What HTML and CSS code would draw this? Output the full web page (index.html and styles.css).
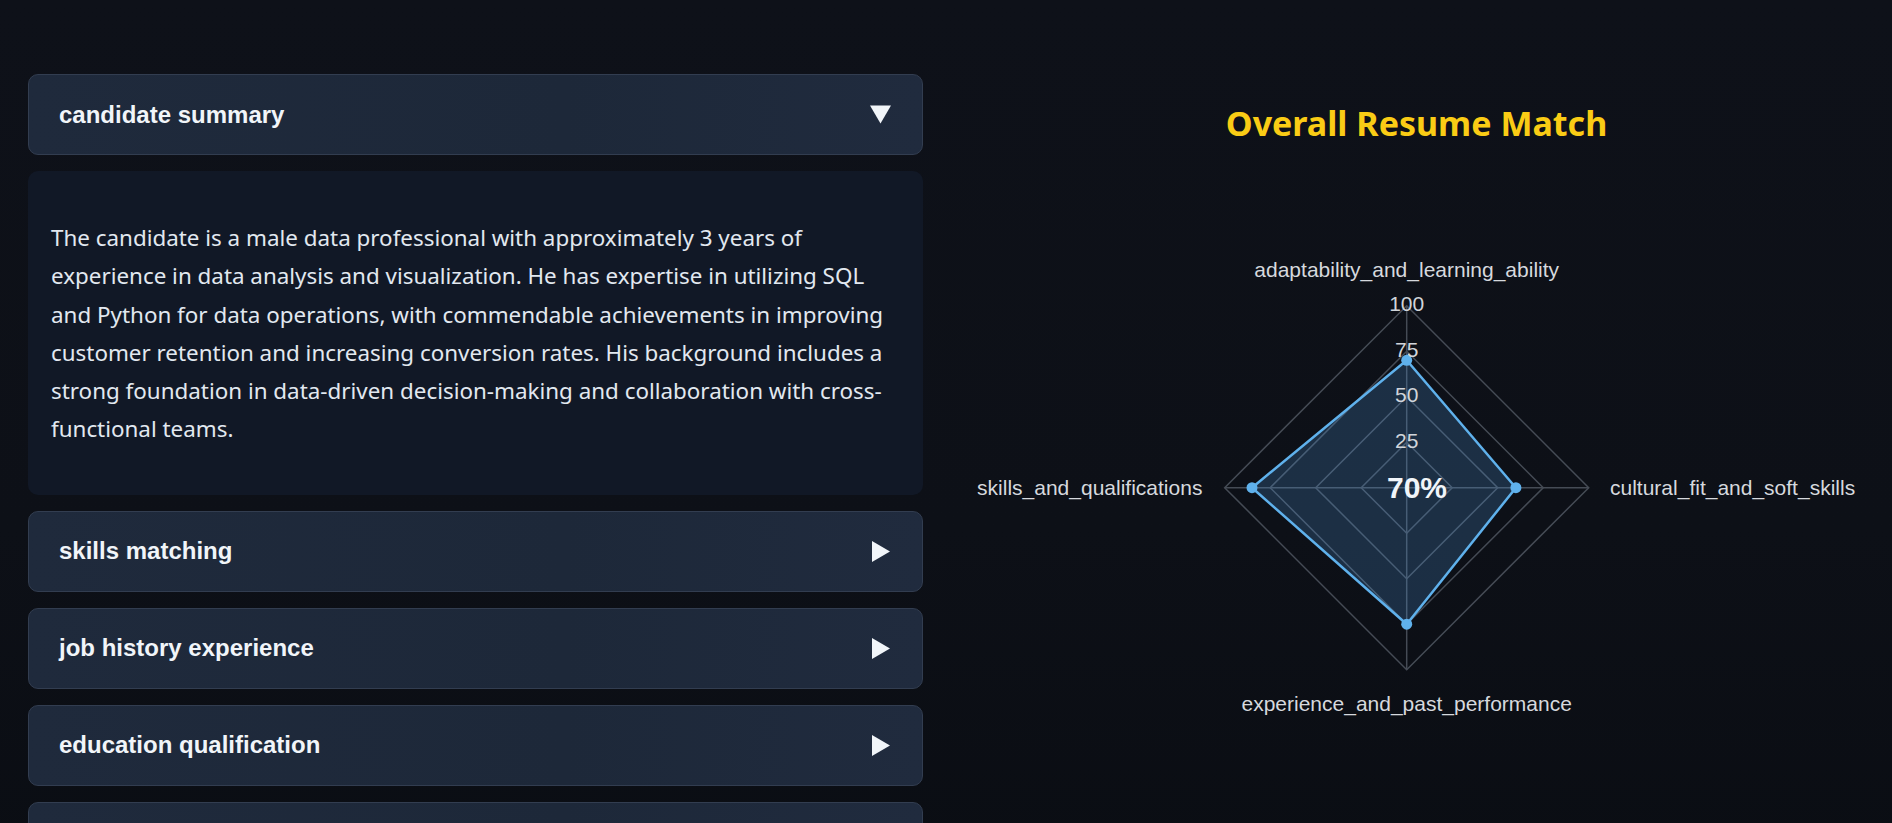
FILE: index.html
```html
<!DOCTYPE html>
<html lang="en">
<head>
<meta charset="utf-8">
<title>Resume Match</title>
<link rel="stylesheet" href="styles.css">
</head>
<body>
<main class="layout">
  <section class="left">
    <div class="acc-head">
      <span class="acc-title">candidate summary</span>
      <svg class="tri" width="21" height="21" viewBox="0 0 21 21"><polygon points="0,1.5 21,1.5 10.5,19.5" /></svg>
    </div>
    <div class="acc-body">
      <p>The candidate is a male data professional with approximately 3 years of experience in data analysis and visualization. He has expertise in utilizing SQL and Python for data operations, with commendable achievements in improving customer retention and increasing conversion rates. His background includes a strong foundation in data-driven decision-making and collaboration with cross-functional teams.</p>
    </div>
    <div class="acc-head">
      <span class="acc-title">skills matching</span>
      <svg class="tri" width="21" height="21" viewBox="0 0 21 21"><polygon points="2,0 20,10.5 2,21" /></svg>
    </div>
    <div class="acc-head">
      <span class="acc-title">job history experience</span>
      <svg class="tri" width="21" height="21" viewBox="0 0 21 21"><polygon points="2,0 20,10.5 2,21" /></svg>
    </div>
    <div class="acc-head">
      <span class="acc-title">education qualification</span>
      <svg class="tri" width="21" height="21" viewBox="0 0 21 21"><polygon points="2,0 20,10.5 2,21" /></svg>
    </div>
    <div class="acc-head acc-partial"></div>
  </section>
  <section class="right">
    <h2 class="chart-title">Overall Resume Match</h2>
    <svg class="radar" width="895" height="560" viewBox="0 0 895 560">
      <g class="grid">
        <polygon points="437.7,242.2 483.2,287.7 437.7,333.2 392.2,287.7" />
        <polygon points="437.7,196.7 528.7,287.7 437.7,378.7 346.7,287.7" />
        <polygon points="437.7,151.2 574.2,287.7 437.7,424.2 301.2,287.7" />
        <polygon points="437.7,105.7 619.7,287.7 437.7,469.7 255.7,287.7" />
        <line x1="437.7" y1="287.7" x2="437.7" y2="105.7" />
        <line x1="437.7" y1="287.7" x2="619.7" y2="287.7" />
        <line x1="437.7" y1="287.7" x2="437.7" y2="469.7" />
        <line x1="437.7" y1="287.7" x2="255.7" y2="287.7" />
      </g>
      <polygon class="data" points="437.7,160.3 546.9,287.7 437.7,424.2 283,287.7" />
      <g class="pts">
        <circle cx="437.7" cy="160.3" r="5.5" />
        <circle cx="546.9" cy="287.7" r="5.5" />
        <circle cx="437.7" cy="424.2" r="5.5" />
        <circle cx="283" cy="287.7" r="5.5" />
      </g>
      <g class="ticks">
        <text x="437.7" y="103.7">100</text>
        <text x="437.7" y="149.2">75</text>
        <text x="437.7" y="194.7">50</text>
        <text x="437.7" y="240.4">25</text>
      </g>
      <g class="labels">
        <text x="437.7" y="69.5" text-anchor="middle">adaptability_and_learning_ability</text>
        <text x="641" y="287.7" text-anchor="start">cultural_fit_and_soft_skills</text>
        <text x="437.7" y="503" text-anchor="middle">experience_and_past_performance</text>
        <text x="233.4" y="287.7" text-anchor="end">skills_and_qualifications</text>
      </g>
      <text class="pct" x="448" y="287.7">70%</text>
    </svg>
  </section>
</main>
</body>
</html>
```
FILE: styles.css
```css
* { box-sizing: border-box; }
html, body { margin: 0; padding: 0; }
body {
  background: linear-gradient(180deg, #0e1119 0%, #0d1017 60%, #0a0d13 100%);
  min-height: 100vh;
  color: #e2e8f0;
  font-family: "Liberation Sans", Arial, sans-serif;
}
.layout {
  display: grid;
  grid-template-columns: 1fr 1fr;
  column-gap: 46px;
  padding: 74px 28px 0 28px;
}
.left {
  display: flex;
  flex-direction: column;
  gap: 16px;
}
.acc-head {
  display: flex;
  align-items: center;
  justify-content: space-between;
  height: 81px;
  padding: 0 31px 0 30px;
  background: linear-gradient(90deg, #1f2a3c 0%, #1d2839 60%, #202b3e 100%);
  border: 1px solid #323d50;
  border-radius: 10px;
}
.acc-title {
  font-family: "Liberation Sans", Arial, sans-serif;
  font-weight: 700;
  font-size: 24px;
  color: #f1f5f9;
}
.tri polygon { fill: #f1f5f9; }
.acc-body {
  background: #111826;
  border-radius: 10px;
  padding: 48px 22px 46px 23px;
}
.acc-body p {
  margin: 0;
  font-family: "Noto Sans", "Open Sans", sans-serif;
  font-size: 22.4px;
  line-height: 38.3px;
  color: #e2e8f0;
}
.right {
  display: flex;
  flex-direction: column;
  align-items: center;
}
.chart-title {
  margin: 29px 0 0 0;
  font-family: "Noto Sans", "Open Sans", sans-serif;
  font-weight: 700;
  font-size: 34px;
  line-height: 40px;
  color: #facc15;
}
.radar {
  display: block;
  margin-top: 57px;
  align-self: flex-start;
}
.grid polygon, .grid line {
  fill: none;
  stroke: #454b55;
  stroke-width: 1.5;
}
.data {
  fill: rgba(80, 160, 230, 0.22);
  stroke: #5fb1ec;
  stroke-width: 2.5;
  stroke-linejoin: round;
}
.pts circle { fill: #5fb1ec; }
.ticks text {
  font-family: "Liberation Sans", Arial, sans-serif;
  font-size: 21px;
  fill: #d1d5db;
  text-anchor: middle;
  dominant-baseline: central;
}
.labels text {
  font-family: "Liberation Sans", Arial, sans-serif;
  font-size: 21px;
  fill: #d6d9de;
  dominant-baseline: central;
}
.pct {
  font-family: "Liberation Sans", Arial, sans-serif;
  font-size: 30px;
  font-weight: 700;
  fill: #f1f5f9;
  text-anchor: middle;
  dominant-baseline: central;
}
```
